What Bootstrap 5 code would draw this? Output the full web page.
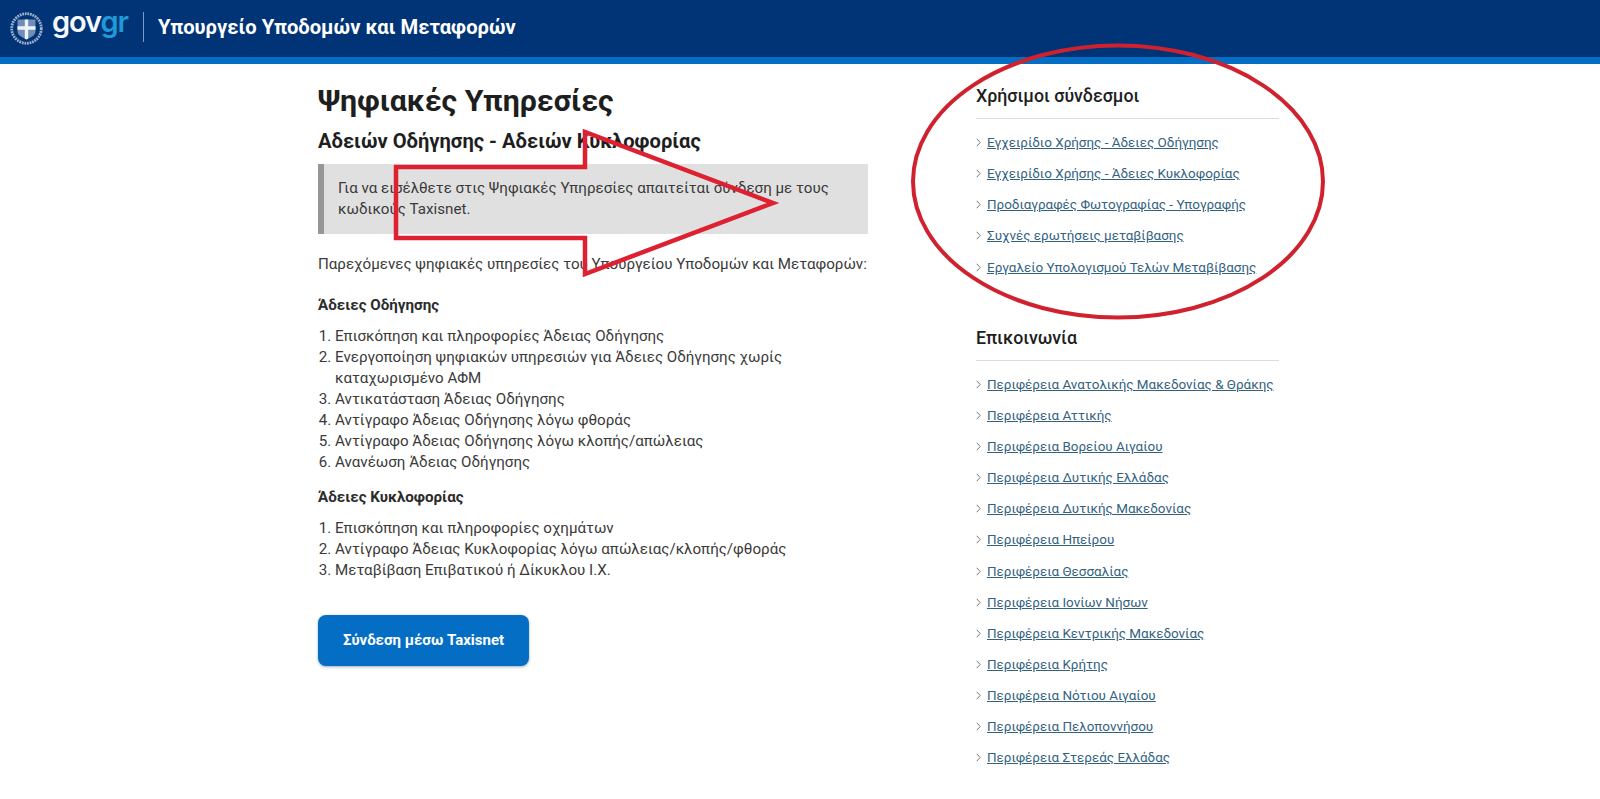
<!DOCTYPE html>
<html lang="el">
<head>
    <meta charset="UTF-8">
    <meta name="viewport" content="width=device-width, initial-scale=1.0">
    <title>Ψηφιακές Υπηρεσίες</title>
    <link rel="stylesheet" href="https://cdn.jsdelivr.net/npm/bootstrap@5.3.0/dist/css/bootstrap.min.css">
    <style>
        html, body {
            height: 799px;
            overflow: hidden;
        }
        body {
            font-family: Roboto, "Liberation Sans", sans-serif;
            font-size: 15.15px;
            line-height: 21px;
            color: #3a3a3a;
            background: #fff;
            position: relative;
        }
        .site-head {
            height: 64px;
            background: #003476;
            border-bottom: 7px solid #046ec5;
            padding-left: 10px;
        }
        .logo-word {
            font-family: Inter, "Liberation Sans", sans-serif;
            font-size: 29px;
            font-weight: 600;
            line-height: 1;
            letter-spacing: -1.1px;
            color: #f4f7fb;
            margin: -15px 0 0 9px;
        }
        .logo-word span {
            color: #1d9ad8;
        }
        .head-sep {
            width: 1px;
            height: 30px;
            background: #7f9bc0;
            margin: -3px 14px 0 15px;
        }
        .head-title {
            font-size: 20.200px;
            font-weight: 700;
            color: #fff;
            margin-top: -3px;
        }
        .page-wrap {
            width: 961px;
            margin-left: 318px;
            padding-top: 17px;
        }
        .left-col {
            width: 550px;
        }
        .right-col {
            width: 303px;
            padding-top: 3px;
        }
        .main-title {
            font-size: 30.300px;
            line-height: 40px;
            font-weight: 700;
            color: #1e1e1e;
            margin: 0 0 7px;
        }
        .sub-title {
            font-size: 20.150px;
            line-height: 26px;
            font-weight: 700;
            color: #1e1e1e;
            margin: 0 0 10px;
        }
        .notice-box {
            background: #e0e0e0;
            border-left: 6px solid #969696;
            padding: 14px 13px 14px 14px;
            margin-bottom: 20px;
        }
        .group-title {
            font-weight: 700;
            color: #2b2b2b;
            margin: 0 0 10px;
        }
        .serv-list {
            padding-left: 17px;
            margin-bottom: 14px;
        }
        .login-btn {
            background: #046ec5;
            color: #fff;
            font-size: 15px;
            font-weight: 700;
            width: 211px;
            height: 51px;
            border: 0;
            border-radius: 8px;
            box-shadow: 0 1px 3px rgba(0, 52, 118, .4);
            margin-top: 20px;
        }
        .side-title {
            font-size: 17.800px;
            line-height: 24px;
            font-weight: 500;
            color: #1e1e1e;
            padding-bottom: 10px;
            border-bottom: 1px solid #dcdcdc;
            margin: 0 0 5.500px;
        }
        .side-links {
            margin-bottom: 45.500px;
        }
        .side-links li {
            height: 31.150px;
            padding-top: 5px;
            font-size: 13.450px;
            line-height: 21px;
            white-space: nowrap;
        }
        .side-links svg {
            flex: none;
            margin-right: 6px;
        }
        .side-links a {
            color: #336281;
        }
        .mark-up {
            position: absolute;
            left: 0;
            top: 0;
            pointer-events: none;
        }
    </style>
</head>
<body>
    <header class="site-head d-flex align-items-center">
        <svg width="33" height="33" viewBox="0 0 33 33" aria-hidden="true">
            <circle cx="16.500" cy="16.500" r="14.800" fill="none" stroke="#9fb2cc" stroke-width="2.800" stroke-dasharray="1.800 .8"/>
            <path d="M7.500 7.500h18v11.500c0 4-4 6.500-9 8-5-1.500-9-4-9-8z" fill="#6f8db6"/>
            <path d="M14.800 7.500h3.400v6.800h7.300v3.400h-7.300v9.100l-1.700.7-1.700-.7v-9.100H7.500v-3.400h7.300z" fill="#eef2f7"/>
        </svg>
        <div class="logo-word">gov<span>gr</span></div>
        <div class="head-sep"></div>
        <div class="head-title">Υπουργείο Υποδομών και Μεταφορών</div>
    </header>

    <main class="page-wrap d-flex justify-content-between">
        <section class="left-col">
            <h1 class="main-title">Ψηφιακές Υπηρεσίες</h1>
            <h2 class="sub-title">Αδειών Οδήγησης - Αδειών Κυκλοφορίας</h2>
            <div class="notice-box">Για να εισέλθετε στις Ψηφιακές Υπηρεσίες απαιτείται σύνδεση με τους κωδικούς Taxisnet.</div>
            <p class="mb-3 pb-1">Παρεχόμενες ψηφιακές υπηρεσίες του Υπουργείου Υποδομών και Μεταφορών:</p>

            <p class="group-title">Άδειες Οδήγησης</p>
            <ol class="serv-list">
                <li>Επισκόπηση και πληροφορίες Άδειας Οδήγησης</li>
                <li>Ενεργοποίηση ψηφιακών υπηρεσιών για Άδειες Οδήγησης χωρίς καταχωρισμένο ΑΦΜ</li>
                <li>Αντικατάσταση Άδειας Οδήγησης</li>
                <li>Αντίγραφο Άδειας Οδήγησης λόγω φθοράς</li>
                <li>Αντίγραφο Άδειας Οδήγησης λόγω κλοπής/απώλειας</li>
                <li>Ανανέωση Άδειας Οδήγησης</li>
            </ol>

            <p class="group-title">Άδειες Κυκλοφορίας</p>
            <ol class="serv-list">
                <li>Επισκόπηση και πληροφορίες οχημάτων</li>
                <li>Αντίγραφο Άδειας Κυκλοφορίας λόγω απώλειας/κλοπής/φθοράς</li>
                <li>Μεταβίβαση Επιβατικού ή Δίκυκλου Ι.Χ.</li>
            </ol>

            <button type="button" class="btn login-btn">Σύνδεση μέσω Taxisnet</button>
        </section>

        <aside class="right-col">
            <h3 class="side-title">Χρήσιμοι σύνδεσμοι</h3>
            <ul class="side-links list-unstyled" id="usefulLinks"></ul>
            <h3 class="side-title">Επικοινωνία</h3>
            <ul class="side-links list-unstyled mb-0" id="contactLinks"></ul>
        </aside>
    </main>

    <svg class="mark-up" width="1600" height="799" viewBox="0 0 1600 799" aria-hidden="true">
        <path d="M396 167H585V132L773 203L585 274V238H396z" fill="none" stroke="#de2130" stroke-width="4.500"/>
        <ellipse cx="1118" cy="181.500" rx="205" ry="136" fill="none" stroke="#d0222e" stroke-width="4"/>
    </svg>

    <script>
        const useful = [
            "Εγχειρίδιο Χρήσης - Άδειες Οδήγησης",
            "Εγχειρίδιο Χρήσης - Άδειες Κυκλοφορίας",
            "Προδιαγραφές Φωτογραφίας - Υπογραφής",
            "Συχνές ερωτήσεις μεταβίβασης",
            "Εργαλείο Υπολογισμού Τελών Μεταβίβασης"
        ];
        const contact = [
            "Περιφέρεια Ανατολικής Μακεδονίας & Θράκης",
            "Περιφέρεια Αττικής",
            "Περιφέρεια Βορείου Αιγαίου",
            "Περιφέρεια Δυτικής Ελλάδας",
            "Περιφέρεια Δυτικής Μακεδονίας",
            "Περιφέρεια Ηπείρου",
            "Περιφέρεια Θεσσαλίας",
            "Περιφέρεια Ιονίων Νήσων",
            "Περιφέρεια Κεντρικής Μακεδονίας",
            "Περιφέρεια Κρήτης",
            "Περιφέρεια Νότιου Αιγαίου",
            "Περιφέρεια Πελοποννήσου",
            "Περιφέρεια Στερεάς Ελλάδας"
        ];
        const chevron = '<svg width="5" height="9" viewBox="0 0 5 9"><path d="M.7.8l3.500 3.700L.7 8.200" fill="none" stroke="#777" stroke-width="1"/></svg>';

        function fillLinks(id, items) {
            document.getElementById(id).innerHTML = items
                .map(t => `<li class="d-flex align-items-center">${chevron}<a href="#">${t}</a></li>`)
                .join("");
        }
        fillLinks("usefulLinks", useful);
        fillLinks("contactLinks", contact);
    </script>
    <script src="https://cdn.jsdelivr.net/npm/bootstrap@5.3.0/dist/js/bootstrap.bundle.min.js"></script>
</body>
</html>
